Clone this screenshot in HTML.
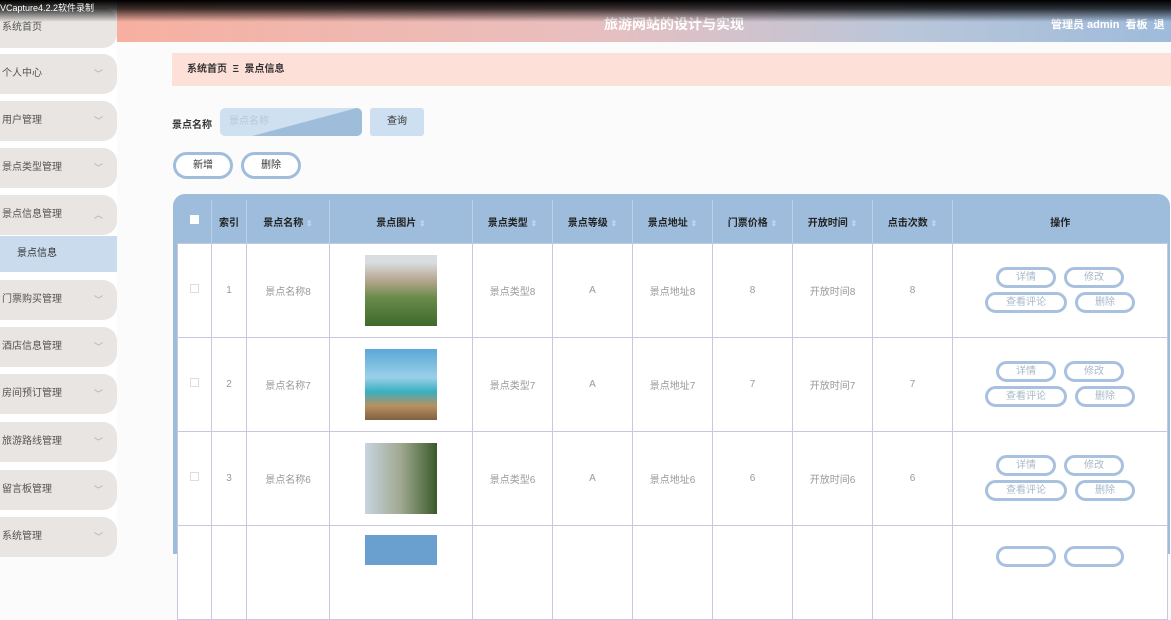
<!DOCTYPE html>
<html><head><meta charset="utf-8"><style>
*{margin:0;padding:0;box-sizing:border-box}
body{width:1171px;height:552px;overflow:hidden;background:#fbfbfc;font-family:"Liberation Sans","Noto Sans CJK SC",sans-serif;font-size:10px;color:#333;position:relative}
.side{position:absolute;left:0;top:0;width:117px;height:552px;background:#fff}
.it{position:absolute;left:-10px;width:127px;height:40px;background:#e8e5e2;border-radius:0 14px 14px 0;color:#555;font-size:10px;padding-left:12px;line-height:40px}
.it span{position:absolute;right:14px;color:#aaa;font-size:9px}
.act{position:absolute;left:0;top:236px;width:117px;height:36px;background:#c9dbec;color:#333;line-height:36px;padding-left:17px;font-size:10px}
.hdr{position:absolute;left:117px;top:0;width:1054px;height:42px;background:linear-gradient(90deg,#f7b0a0,#e8bfbf 45%,#b9c6da 75%,#9ebbdb)}
.top{position:absolute;left:0;top:0;width:1171px;height:22px;background:linear-gradient(#000,rgba(0,0,0,0.75) 40%,rgba(0,0,0,0))}
.rec{position:absolute;left:0;top:1px;color:#fff;font-size:9px}
.title{position:absolute;left:604px;top:14px;color:#fff;font-size:14px;font-weight:bold}
.user{position:absolute;left:1051px;top:16px;color:#fff;font-size:11px;font-weight:bold}
.bc{position:absolute;left:172px;top:53px;width:999px;height:33px;background:#fde0d8;font-size:10px;font-weight:bold;line-height:33px;padding-left:15px}
.lbl{position:absolute;left:172px;top:116px;font-weight:bold}
.inp{position:absolute;left:220px;top:108px;width:142px;height:28px;border-radius:5px;background:linear-gradient(165deg,#cfe0f0 55%,#9ebddb 56%);color:#b8c8d8;padding-left:9px;line-height:28px}
.q{position:absolute;left:370px;top:108px;width:54px;height:28px;background:#cddff0;border-radius:3px;text-align:center;line-height:28px}
.pb{position:absolute;top:152px;width:60px;height:27px;border:3px solid #a0bddb;border-radius:14px;background:#fff;text-align:center;line-height:21px}
.tbl{position:absolute;left:173px;top:194px;width:997px;height:360px;background:#9ebddc;border-radius:12px 12px 0 0;padding:6px 2px 0 4px}
table{border-collapse:collapse;width:991px;table-layout:fixed}
th{height:43px;font-weight:bold;font-size:10px;border-left:1px solid #bcd0e6;color:#222}
td{height:94px;background:#fff;text-align:center;color:#999;font-size:10px;border:1px solid #c8c8dc}
th:first-child{border-left:none}
.ob{display:inline-block;border:3px solid #a7c1de;border-radius:12px;height:21px;line-height:15px;color:#a8b8c8;margin:2px 4px;background:#fff}
.img{width:72px;height:71px;margin:auto}
.ar{color:#c6d8ea;font-size:8px}
.cb{display:inline-block;width:9px;height:9px;border:1px solid #ddd;background:#fff}
tr.last td{vertical-align:top}
</style></head><body>
<div class="side">
<div class="it" style="top:8px">系统首页</div>
<div class="it" style="top:54px">个人中心<span>﹀</span></div>
<div class="it" style="top:101px">用户管理<span>﹀</span></div>
<div class="it" style="top:148px">景点类型管理<span>﹀</span></div>
<div class="it" style="top:195px">景点信息管理<span>︿</span></div>
<div class="act">景点信息</div>
<div class="it" style="top:280px">门票购买管理<span>﹀</span></div>
<div class="it" style="top:327px">酒店信息管理<span>﹀</span></div>
<div class="it" style="top:374px">房间预订管理<span>﹀</span></div>
<div class="it" style="top:422px">旅游路线管理<span>﹀</span></div>
<div class="it" style="top:470px">留言板管理<span>﹀</span></div>
<div class="it" style="top:517px">系统管理<span>﹀</span></div>
</div>
<div class="hdr"></div>
<div class="title">旅游网站的设计与实现</div>
<div class="user">管理员 admin &nbsp;看板 &nbsp;退</div>
<div class="top"></div>
<div class="rec">VCapture4.2.2软件录制</div>
<div class="bc">系统首页 &nbsp;Ξ &nbsp;景点信息</div>
<div class="lbl">景点名称</div>
<div class="inp">景点名称</div>
<div class="q">查询</div>
<div class="pb" style="left:173px">新增</div>
<div class="pb" style="left:241px">删除</div>
<div class="tbl"><table>
<colgroup><col style="width:34px"><col style="width:35px"><col style="width:83px"><col style="width:143px"><col style="width:80px"><col style="width:80px"><col style="width:80px"><col style="width:80px"><col style="width:80px"><col style="width:80px"><col></colgroup>
<tr><th><span class="cb" style="border:none"></span></th><th>索引</th><th>景点名称 <span class="ar">⇕</span></th><th>景点图片 <span class="ar">⇕</span></th><th>景点类型 <span class="ar">⇕</span></th><th>景点等级 <span class="ar">⇕</span></th><th>景点地址 <span class="ar">⇕</span></th><th>门票价格 <span class="ar">⇕</span></th><th>开放时间 <span class="ar">⇕</span></th><th>点击次数 <span class="ar">⇕</span></th><th>操作</th></tr>
<tr><td><span class="cb"></span></td><td>1</td><td>景点名称8</td><td><div class="img" style="background:linear-gradient(#d8dee0 10%,#b8a890 35%,#6a8a4a 60%,#3d6a2a)"></div></td><td>景点类型8</td><td>A</td><td>景点地址8</td><td>8</td><td>开放时间8</td><td>8</td><td><span class="ob" style="width:60px">详情</span><span class="ob" style="width:60px">修改</span><br><span class="ob" style="width:82px">查看评论</span><span class="ob" style="width:60px">删除</span></td></tr>
<tr><td><span class="cb"></span></td><td>2</td><td>景点名称7</td><td><div class="img" style="background:linear-gradient(#5aa8d8,#9ad0e8 40%,#38b0c0 60%,#b89060 80%,#806040)"></div></td><td>景点类型7</td><td>A</td><td>景点地址7</td><td>7</td><td>开放时间7</td><td>7</td><td><span class="ob" style="width:60px">详情</span><span class="ob" style="width:60px">修改</span><br><span class="ob" style="width:82px">查看评论</span><span class="ob" style="width:60px">删除</span></td></tr>
<tr><td><span class="cb"></span></td><td>3</td><td>景点名称6</td><td><div class="img" style="background:linear-gradient(90deg,#c8d4e0,#a0a890 50%,#3a5a2a)"></div></td><td>景点类型6</td><td>A</td><td>景点地址6</td><td>6</td><td>开放时间6</td><td>6</td><td><span class="ob" style="width:60px">详情</span><span class="ob" style="width:60px">修改</span><br><span class="ob" style="width:82px">查看评论</span><span class="ob" style="width:60px">删除</span></td></tr>
<tr class="last"><td></td><td></td><td></td><td><div class="img" style="background:#6aa0d0;height:30px;margin-top:9px"></div></td><td></td><td></td><td></td><td></td><td></td><td></td><td><span class="ob" style="width:60px;margin-top:20px">&nbsp;</span><span class="ob" style="width:60px;margin-top:20px">&nbsp;</span></td></tr>
</table></div>
</body></html>
